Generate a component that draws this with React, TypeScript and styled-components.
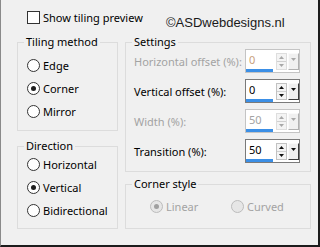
import React from 'react';
import styled, {createGlobalStyle} from 'styled-components';

const GlobalStyle = createGlobalStyle`
  html, body {
    margin: 0;
    padding: 0;
    background: #f0f0f0;
  }
`;

const Dialog = styled.div`
  width: 320px;
  height: 247px;
  box-sizing: border-box;
  background: #f0f0f0;
  border-left: 1px solid #8a8a8a;
  border-right: 2px solid #1c1c1c;
  border-bottom: 2px solid #1c1c1c;
  padding-left: 16px;
  font-family: "Noto Sans", sans-serif;
  font-size: 11px;
  color: #000;
`;

const TopRow = styled.div`
  display: grid;
  grid-template-columns: 149px auto;
  height: 35px;
  align-items: start;
`;

const CheckLabel = styled.label`
  display: flex;
  align-items: center;
  gap: 3px;
  margin: 10px 0 0 10px;
  line-height: 15px;
`;

const CheckBox = styled.span`
  width: 13px;
  height: 13px;
  box-sizing: border-box;
  border: 1px solid #333;
  background: #fff;
`;

const Copyright = styled.div`
  margin-top: 15px;
  font-family: "Liberation Sans", Arial, sans-serif;
  font-size: 13px;
  line-height: 15px;
  color: #1a1a1a;
`;

const Columns = styled.div`
  display: flex;
  gap: 7px;
`;

const Column = styled.div<{$width: number; $gap: number}>`
  width: ${p => p.$width}px;
  display: flex;
  flex-direction: column;
  gap: ${p => p.$gap}px;
`;

const Group = styled.fieldset`
  margin: 0;
  min-width: 0;
  padding: 0;
  border: 1px solid #dcdcdc;
  box-sizing: border-box;
`;

const Legend = styled.legend`
  padding: 0 2px;
  margin-left: 6px;
  line-height: 14px;
  font-size: 11px;
  color: #000;
`;

const GroupBody = styled.div<{$pad: string}>`
  padding: ${p => p.$pad};
`;

const RadioRow = styled.div<{$height: number; $width?: number; $disabled?: boolean}>`
  display: flex;
  align-items: center;
  gap: 3px;
  height: ${p => p.$height}px;
  width: ${p => (p.$width ? `${p.$width}px` : 'auto')};
  color: ${p => (p.$disabled ? '#a3a3a3' : '#000')};
`;

const RadioCircle = styled.span<{$checked?: boolean; $disabled?: boolean}>`
  width: 13px;
  height: 13px;
  box-sizing: border-box;
  border-radius: 50%;
  border: 1px solid ${p => (p.$disabled ? '#bcbcbc' : '#333')};
  background: ${p => (p.$disabled ? '#e6e6e6' : '#fff')};
  display: flex;
  align-items: center;
  justify-content: center;
  flex-shrink: 0;

  &::after {
    content: '';
    display: ${p => (p.$checked ? 'block' : 'none')};
    width: 5px;
    height: 5px;
    border-radius: 50%;
    background: ${p => (p.$disabled ? '#a0a0a0' : '#1e1e1e')};
  }
`;

const CornerRow = styled.div`
  display: flex;
  align-items: center;
`;

const SettingsGrid = styled.div`
  display: grid;
  grid-template-columns: 111px 55px;
  row-gap: 6px;
  align-items: center;
`;

const FieldLabel = styled.span<{$disabled?: boolean}>`
  color: ${p => (p.$disabled ? '#a3a3a3' : '#000')};
`;

const SpinBox = styled.div<{$disabled?: boolean}>`
  width: 55px;
  height: 24px;
  box-sizing: border-box;
  border: 1px solid ${p => (p.$disabled ? '#c4c4c4' : '#7a7a7a')};
  background: #fff;
  display: flex;
  align-items: center;
`;

const Field = styled.div`
  width: 29px;
  height: 22px;
  display: flex;
  flex-direction: column;
`;

const Value = styled.span<{$color: string}>`
  flex: 1;
  padding-left: 3px;
  line-height: 19px;
  font-size: 11px;
  color: ${p => p.$color};
`;

const Bar = styled.span`
  width: 27px;
  height: 3px;
  background: #3b8fe6;
`;

const Spin = styled.div<{$disabled?: boolean}>`
  margin-left: 1px;
  width: 11px;
  height: 17px;
  box-sizing: border-box;
  border: 1px solid ${p => (p.$disabled ? '#dedede' : '#c2c2c2')};
  background: #f4f4f4;
  display: flex;
  flex-direction: column;
`;

const SpinHalf = styled.div<{$top?: boolean}>`
  flex: 1;
  display: flex;
  align-items: center;
  justify-content: center;
  border-bottom: ${p => (p.$top ? '1px solid #d0d0d0' : 'none')};
`;

const Drop = styled.div<{$disabled?: boolean}>`
  margin-left: 1px;
  width: 11px;
  height: 17px;
  box-sizing: border-box;
  background: #f0f0f0;
  border-top: 1px solid #fafafa;
  border-left: 1px solid #fafafa;
  border-right: 1px solid ${p => (p.$disabled ? '#b0b0b0' : '#3c3c3c')};
  border-bottom: 1px solid ${p => (p.$disabled ? '#b0b0b0' : '#3c3c3c')};
  display: flex;
  justify-content: center;
  padding-top: 4px;
`;

function Triangle({up, color}: {up?: boolean; color: string}) {
  return (
    <svg width="5" height="3" viewBox="0 0 5 3">
      <polygon points={up ? '0,3 2.5,0 5,3' : '0,0 5,0 2.5,3'} fill={color} />
    </svg>
  );
}

function NumberField({value, disabled, valueColor}: {value: string; disabled?: boolean; valueColor?: string}) {
  const arrow = disabled ? '#a8a8a8' : '#111';
  return (
    <SpinBox $disabled={disabled}>
      <Field>
        <Value $color={valueColor || (disabled ? '#a3a3a3' : '#000')}>{value}</Value>
        <Bar />
      </Field>
      <Spin $disabled={disabled}>
        <SpinHalf $top><Triangle up color={arrow} /></SpinHalf>
        <SpinHalf><Triangle color={arrow} /></SpinHalf>
      </Spin>
      <Drop $disabled={disabled}>
        <Triangle color={arrow} />
      </Drop>
    </SpinBox>
  );
}

function Radio({label, checked, disabled, height, width}: {label: string; checked?: boolean; disabled?: boolean; height: number; width?: number}) {
  return (
    <RadioRow $height={height} $width={width} $disabled={disabled}>
      <RadioCircle $checked={checked} $disabled={disabled} />
      <span>{label}</span>
    </RadioRow>
  );
}

export default function App() {
  return (
    <>
      <GlobalStyle />
      <Dialog>
        <TopRow>
          <CheckLabel>
            <CheckBox />
            <span>Show tiling preview</span>
          </CheckLabel>
          <Copyright>©ASDwebdesigns.nl</Copyright>
        </TopRow>
        <Columns>
          <Column $width={101} $gap={8}>
            <Group>
              <Legend>Tiling method</Legend>
              <GroupBody $pad="5px 0 7px 9px">
                <Radio label="Edge" height={23} />
                <Radio label="Corner" checked height={23} />
                <Radio label="Mirror" height={23} />
              </GroupBody>
            </Group>
            <Group>
              <Legend>Direction</Legend>
              <GroupBody $pad="0 0 6px 9px">
                <Radio label="Horizontal" height={23} />
                <Radio label="Vertical" checked height={23} />
                <Radio label="Bidirectional" height={23} />
              </GroupBody>
            </Group>
          </Column>
          <Column $width={186} $gap={5}>
            <Group>
              <Legend>Settings</Legend>
              <GroupBody $pad="0 0 8px 8px">
                <SettingsGrid>
                  <FieldLabel $disabled>Horizontal offset (%):</FieldLabel>
                  <NumberField value="0" disabled valueColor="#c8a07c" />
                  <FieldLabel>Vertical offset (%):</FieldLabel>
                  <NumberField value="0" />
                  <FieldLabel $disabled>Width (%):</FieldLabel>
                  <NumberField value="50" disabled />
                  <FieldLabel>Transition (%):</FieldLabel>
                  <NumberField value="50" />
                </SettingsGrid>
              </GroupBody>
            </Group>
            <Group>
              <Legend>Corner style</Legend>
              <GroupBody $pad="3px 0 10px 24px">
                <CornerRow>
                  <Radio label="Linear" checked disabled height={24} width={81} />
                  <Radio label="Curved" disabled height={24} />
                </CornerRow>
              </GroupBody>
            </Group>
          </Column>
        </Columns>
      </Dialog>
    </>
  );
}
